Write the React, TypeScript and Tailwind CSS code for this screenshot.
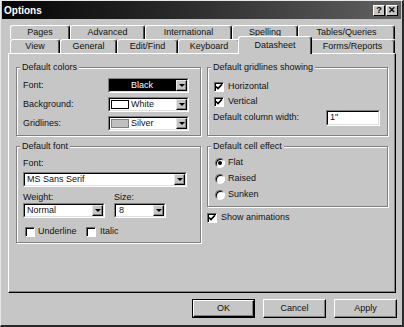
import type { ReactNode } from "react";

const row1 = [
  { name: "Pages", w: "w-[60px]" },
  { name: "Advanced", w: "w-[75px]" },
  { name: "International", w: "w-[87px]" },
  { name: "Spelling", w: "w-[66px]" },
  { name: "Tables/Queries", w: "w-[97px]" },
];

const row2 = [
  { name: "View", w: "w-[50px]" },
  { name: "General", w: "w-[57px]" },
  { name: "Edit/Find", w: "w-[61px]" },
  { name: "Keyboard", w: "w-[62px]" },
  { name: "Datasheet", w: "w-[74px]", active: true },
  { name: "Forms/Reports", w: "w-[85px]" },
];

const Tab = ({ name, w, active }: { name: string; w: string; active?: boolean }) => {
  if (active) {
    return (
      <div
        className={`${w} relative z-10 -mx-[2px] -mt-[3px] h-[18px] flex items-center justify-center bg-[#c6c6c6] border-t border-l border-r border-t-white border-l-white border-r-black rounded-t-[3px] shadow-[inset_-1px_0_0_#505050]`}
      >
        {name}
      </div>
    );
  }
  return (
    <div
      className={`${w} h-[14px] flex items-center justify-center bg-[#c6c6c6] border-t border-l border-r border-t-white border-l-white border-r-black rounded-t-[3px] shadow-[inset_-1px_0_0_#505050]`}
    >
      {name}
    </div>
  );
};

const Group = ({
  label,
  className,
  children,
}: {
  label: string;
  className: string;
  children: ReactNode;
}) => (
  <div
    className={`relative border border-[#808080] shadow-[inset_1px_1px_0_#fff,1px_1px_0_#fff] ${className}`}
  >
    <span className="absolute -top-[6px] left-[3px] px-[2px] bg-[#c6c6c6] leading-[11px]">
      {label}
    </span>
    {children}
  </div>
);

const Arrow = () => (
  <div className="w-[11px] h-full flex items-center justify-center bg-[#c6c6c6] border-t border-l border-r border-b border-t-[#e6e6e6] border-l-[#e6e6e6] border-r-black border-b-black shadow-[inset_-1px_-1px_0_#808080]">
    <span className="w-0 h-0 border-l-[3px] border-r-[3px] border-t-[3px] border-l-transparent border-r-transparent border-t-black" />
  </div>
);

const Combo = ({
  w,
  dark,
  children,
}: {
  w: string;
  dark?: boolean;
  children: ReactNode;
}) => (
  <div
    className={`${w} h-[15px] border border-t-[#808080] border-l-[#808080] border-r-white border-b-white`}
  >
    <div
      className={`h-full flex border border-t-black border-l-black border-r-[#dfdfdf] border-b-[#dfdfdf] ${
        dark ? "bg-black text-white" : "bg-white"
      }`}
    >
      <div className="flex-1 flex items-center overflow-hidden leading-[11px]">
        {children}
      </div>
      <Arrow />
    </div>
  </div>
);

const Check = ({ checked }: { checked?: boolean }) => (
  <div className="w-[10px] h-[10px] shrink-0 bg-white border border-t-[#6a6a6a] border-l-[#6a6a6a] border-r-white border-b-white shadow-[inset_1px_1px_0_#000] flex items-center justify-center">
    {checked && (
      <svg width="8" height="8" viewBox="0 0 8 8">
        <path d="M1 3.5 L3 5.6 L7 1.2" fill="none" stroke="#000" strokeWidth="1.7" />
      </svg>
    )}
  </div>
);

const Radio = ({ checked }: { checked?: boolean }) => (
  <div className="w-[10px] h-[10px] shrink-0 rounded-full bg-white border border-t-[#6a6a6a] border-l-[#6a6a6a] border-r-white border-b-white shadow-[inset_1px_1px_0_#000] flex items-center justify-center">
    {checked && <span className="w-[4px] h-[4px] rounded-full bg-black" />}
  </div>
);

const Button = ({ label, isDefault }: { label: string; isDefault?: boolean }) => (
  <div
    className={`w-[63px] h-[19px] ${isDefault ? "border border-black" : ""} flex`}
  >
    <div className="flex-1 flex items-center justify-center bg-[#c6c6c6] border border-t-white border-l-white border-r-black border-b-black shadow-[inset_-1px_-1px_0_#808080]">
      {label}
    </div>
  </div>
);

const TitleButton = ({ children }: { children: ReactNode }) => (
  <div className="w-[12px] h-[11px] flex items-center justify-center bg-[#c6c6c6] border border-t-white border-l-white border-r-black border-b-black text-black text-[9px] font-bold leading-none">
    {children}
  </div>
);

const App = () => {
  return (
    <div className="w-[404px] h-[327px] flex flex-col bg-[#c6c6c6] border-t border-l border-r-2 border-b-2 border-t-[#e8e8e8] border-l-[#e8e8e8] border-r-[#2a2a2a] border-b-[#2a2a2a] px-px pb-px font-['Liberation_Sans',Arial,sans-serif] text-[9px] text-[#111]">
      <div className="h-[18px] flex items-center justify-between bg-gradient-to-r from-[#060606] to-[#626262] pl-[2px] pr-[3px]">
        <span className="text-white font-bold text-[10px]">Options</span>
        <div className="flex gap-[1px]">
          <TitleButton>?</TitleButton>
          <TitleButton>✕</TitleButton>
        </div>
      </div>

      <div className="flex flex-col pl-[6px] pr-[5px] mt-[6px]">
        <div className="ml-[2px] w-[385px] flex">
          {row1.map((t) => (
            <Tab key={t.name} name={t.name} w={t.w} />
          ))}
        </div>
        <div className="ml-[2px] w-[385px] h-[14px] flex items-start">
          {row2.map((t) => (
            <Tab key={t.name} name={t.name} w={t.w} active={t.active} />
          ))}
        </div>

        <div className="h-[240px] flex gap-[6px] pl-[7px] pt-[13px] border border-t-white border-l-white border-r-black border-b-black shadow-[inset_-1px_-1px_0_#808080]">
          <div className="w-[185px] flex flex-col gap-[10px]">
            <Group label="Default colors" className="h-[69px] pt-[10px] pl-[6px]">
              <div className="flex flex-col gap-[4px]">
                <div className="h-[15px] flex items-center">
                  <span className="w-[85px]">Font:</span>
                  <Combo w="w-[81px]" dark>
                    <span className="w-[18px] h-[9px] ml-px bg-black" />
                    <span className="ml-[2px]">Black</span>
                  </Combo>
                </div>
                <div className="h-[15px] flex items-center">
                  <span className="w-[85px]">Background:</span>
                  <Combo w="w-[81px]">
                    <span className="w-[18px] h-[9px] ml-px bg-white border border-black" />
                    <span className="ml-[2px]">White</span>
                  </Combo>
                </div>
                <div className="h-[15px] flex items-center">
                  <span className="w-[85px]">Gridlines:</span>
                  <Combo w="w-[81px]">
                    <span className="w-[18px] h-[9px] ml-px bg-[#c0c0c0] border border-[#808080]" />
                    <span className="ml-[2px]">Silver</span>
                  </Combo>
                </div>
              </div>
            </Group>

            <Group label="Default font" className="h-[97px] pt-[11px] pl-[6px]">
              <div className="leading-[11px]">Font:</div>
              <div className="mt-[3px]">
                <Combo w="w-[164px]">
                  <span className="ml-[2px]">MS Sans Serif</span>
                </Combo>
              </div>
              <div className="mt-[5px] flex gap-[9px]">
                <div className="flex flex-col">
                  <span className="leading-[11px]">Weight:</span>
                  <Combo w="w-[82px]">
                    <span className="ml-[2px]">Normal</span>
                  </Combo>
                </div>
                <div className="flex flex-col">
                  <span className="leading-[11px]">Size:</span>
                  <Combo w="w-[52px]">
                    <span className="ml-[3px]">8</span>
                  </Combo>
                </div>
              </div>
              <div className="mt-[9px] h-[10px] flex items-center pl-[2px]">
                <div className="w-[61px] flex items-center gap-[3px]">
                  <Check />
                  <span>Underline</span>
                </div>
                <div className="flex items-center gap-[4px]">
                  <Check />
                  <span>Italic</span>
                </div>
              </div>
            </Group>
          </div>

          <div className="w-[181px] flex flex-col">
            <Group label="Default gridlines showing" className="h-[69px] pt-[13px]">
              <div className="h-[12px] flex items-center gap-[4px] pl-[6px]">
                <Check checked />
                <span>Horizontal</span>
              </div>
              <div className="mt-[3px] h-[12px] flex items-center gap-[4px] pl-[6px]">
                <Check checked />
                <span>Vertical</span>
              </div>
              <div className="mt-[2px] h-[16px] flex items-center pl-[5px] pr-[7px]">
                <span>Default column width:</span>
                <div className="ml-auto w-[54px] h-[16px] border border-t-[#808080] border-l-[#808080] border-r-white border-b-white">
                  <div className="h-full flex items-center bg-white border border-t-black border-l-black border-r-[#dfdfdf] border-b-[#dfdfdf] pl-[2px]">
                    1"
                  </div>
                </div>
              </div>
            </Group>

            <Group label="Default cell effect" className="mt-[10px] h-[61px] pt-[10px] pl-[7px]">
              <div className="flex flex-col gap-[4px]">
                <div className="h-[12px] flex items-center gap-[3px]">
                  <Radio checked />
                  <span>Flat</span>
                </div>
                <div className="h-[12px] flex items-center gap-[3px]">
                  <Radio />
                  <span>Raised</span>
                </div>
                <div className="h-[12px] flex items-center gap-[3px]">
                  <Radio />
                  <span>Sunken</span>
                </div>
              </div>
            </Group>

            <div className="mt-[6px] h-[10px] flex items-center gap-[4px]">
              <Check checked />
              <span>Show animations</span>
            </div>
          </div>
        </div>

        <div className="mt-[6px] -mr-px flex justify-end gap-[8px]">
          <Button label="OK" isDefault />
          <Button label="Cancel" />
          <Button label="Apply" />
        </div>
      </div>
    </div>
  );
};

export default App;
